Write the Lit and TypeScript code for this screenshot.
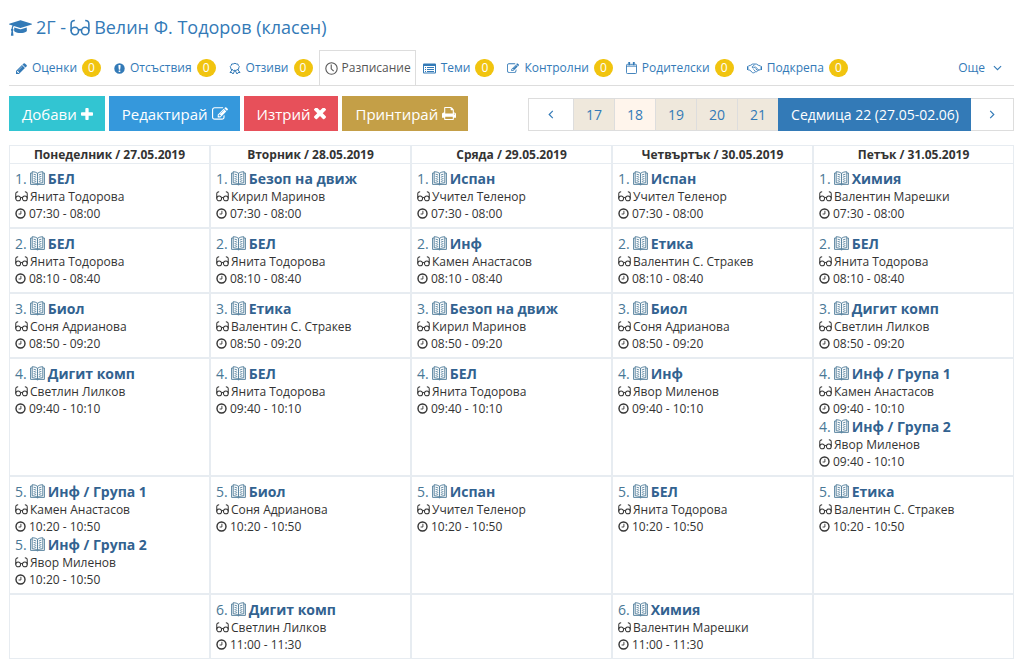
import { LitElement, html, css, svg, nothing } from "lit";
import { customElement, property, state } from "lit/decorators.js";
import { classMap } from "lit/directives/class-map.js";

type Glyph = { box: string; w: number; h: number; body: unknown };

const EDIT_PATH =
  "M888 1184l116-116-152-152-116 116v56h96v96h56zm440-720q-16-16-33 1l-350 350q-17 17-1 33t33-1l350-350q17-17 1-33zm80 594v190q0 119-84.5 203.5t-203.5 84.5h-832q-119 0-203.5-84.5t-84.5-203.5v-832q0-119 84.5-203.5t203.5-84.5h832q63 0 117 25 15 7 18 23 3 17-9 29l-49 49q-14 14-32 8-23-6-45-6h-832q-66 0-113 47t-47 113v832q0 66 47 113t113 47h832q66 0 113-47t47-113v-126q0-13 9-22l64-64q15-15 35-7t20 29zm-96-738l288 288-672 672h-288v-288zm444 132l-92 92-288-288 92-92q28-28 68-28t68 28l152 152q28 28 28 68t-28 68z";

const GLASSES = svg`<g fill="none" stroke="currentColor" stroke-width="2.100"><circle cx="6.500" cy="15.500" r="5"/><circle cx="20.500" cy="15.500" r="5"/><path d="M11.500 14.500q2-1.500 4 0M1.500 15.500V6q0-4.500 5-4.500M25.500 15.500V6q0-4.500-5-4.500"/></g>`;

const GLYPHS: Record<string, Glyph> = {
  cap: {
    box: "0 0 2304 1792", w: 23, h: 18,
    body: svg`<path d="M1774 836l18 316q4 69-82 128t-235 93.5-323 34.5-323-34.5-235-93.5-82-128l18-316 574 181q22 7 48 7t48-7zm530-324q0 23-22 31l-1120 352q-4 1-10 1t-10-1l-652-206q-43 34-71 111.5t-34 178.5q63 36 63 109 0 69-58 107l58 433q2 14-8 25-9 11-24 11h-192q-15 0-24-11-10-11-8-25l58-433q-58-38-58-107 0-73 65-111 11-207 98-330l-333-104q-22-8-22-31t22-31l1120-352q4-1 10-1t10 1l1120 352q22 8 22 31z"/>`,
  },
  glassesLarge: { box: "0 0 27 23", w: 20, h: 18, body: GLASSES },
  glasses: { box: "0 0 27 23", w: 13, h: 11, body: GLASSES },
  pencil: {
    box: "128 128 1536 1536", w: 11, h: 11,
    body: svg`<path d="M491 1536l91-91-235-235-91 91v107h128v128h107zm523-928q0-22-22-22-10 0-17 7l-542 542q-7 7-7 17 0 22 22 22 10 0 17-7l542-542q7-7 7-17zm-54-192l416 416-832 832h-416v-416zm683 96q0 53-37 90l-166 166-416-416 166-165q36-38 90-38 53 0 91 38l235 234q37 39 37 91z"/>`,
  },
  alert: {
    box: "0 0 12 12", w: 11, h: 11,
    body: svg`<path fill-rule="evenodd" d="M6 .3a5.700 5.700 0 1 0 0 11.400A5.700 5.700 0 0 0 6 .3zM4.900 2.300h2.200v2L6.700 7.300H5.300L4.900 4.300zM5.100 8.300h1.800v1.600H5.100z"/>`,
  },
  ribbon: {
    box: "0 0 24 24", w: 12, h: 13,
    body: svg`<g fill="none" stroke="currentColor" stroke-width="2"><path d="M12 1.500l2.600 1.400 3 .1 1 2.800 1.900 2.200-1 2.800-.6 3-2.900.8-2.300 1.600L12 15.300l-2.700.9L7 14.600l-2.900-.8-.6-3-1-2.800 1.900-2.200 1-2.800 3-.1z"/><path d="M7 13.500L2 20l4 .2L8 23l3.600-7M17 13.500l5 6.500-4 .2-2 2.800-3.600-7"/></g>`,
  },
  clockThin: {
    box: "0 0 24 24", w: 13, h: 13,
    body: svg`<g fill="none" stroke="currentColor" stroke-width="2"><circle cx="12" cy="12" r="10.500"/><path d="M11.500 4.500v8l4.500 4.500"/></g>`,
  },
  list: {
    box: "0 0 13 11", w: 13, h: 11,
    body: svg`<path fill-rule="evenodd" d="M1 .5h11q1 0 1 1v8q0 1-1 1H1q-1 0-1-1v-8q0-1 1-1zM1 3v6.500h11V3z"/><path d="M2 4h1v1H2zM4 4h7v1H4zM2 6h1v1H2zM4 6h7v1H4zM2 8h1v1H2zM4 8h7v1H4z"/>`,
  },
  editSmall: { box: "0 128 1792 1536", w: 12, h: 11, body: svg`<path d=${EDIT_PATH}/>` },
  edit: { box: "0 128 1792 1536", w: 16, h: 14, body: svg`<path d=${EDIT_PATH}/>` },
  calendar: {
    box: "0 0 12 13", w: 11, h: 12,
    body: svg`<path fill="none" stroke="currentColor" d="M2.500 2.500H1.500q-1 0-1 1v8q0 1 1 1h9q1 0 1-1v-8q0-1-1-1h-1M4.500 2.500h3M.5 4.500h11"/><path d="M2.500 0h2v3.500h-2zM7.500 0h2v3.500h-2z"/>`,
  },
  hands: {
    box: "0 0 32 22", w: 15, h: 11,
    body: svg`<g fill="none" stroke="currentColor" stroke-width="2"><path stroke-width="3" d="M1.500 6v8M30.500 6v8"/><path d="M3 5.500l4-1 5-3h8l5 3 4 1M16 3.500l-5 4q0 3 3 2l4-2 7 7M3 14.500h3l6 5.500q2 1 3-1 2 1 3-1 2 1 3-1 2 0 3-2.500l5-1M14 13l4 4M18 11l4 4"/></g>`,
  },
  chevronDown: { box: "0 0 10 6", w: 9, h: 6, body: svg`<path fill="none" stroke="currentColor" stroke-width="1.200" d="M1 .8l4 4 4-4"/>` },
  chevronLeft: { box: "0 0 6 10", w: 6, h: 9, body: svg`<path fill="none" stroke="currentColor" stroke-width="1.300" d="M5 1L1 5l4 4"/>` },
  chevronRight: { box: "0 0 6 10", w: 6, h: 9, body: svg`<path fill="none" stroke="currentColor" stroke-width="1.300" d="M1 1l4 4-4 4"/>` },
  plus: {
    box: "192 128 1408 1408", w: 12, h: 12,
    body: svg`<path d="M1600 736v192q0 40-28 68t-68 28h-416v416q0 40-28 68t-68 28h-192q-40 0-68-28t-28-68v-416h-416q-40 0-68-28t-28-68v-192q0-40 28-68t68-28h416v-416q0-40 28-68t68-28h192q40 0 68 28t28 68v416h416q40 0 68 28t28 68z"/>`,
  },
  cross: {
    box: "302 434 1188 1188", w: 12, h: 12,
    body: svg`<path d="M1490 1322q0 40-28 68l-136 136q-28 28-68 28t-68-28l-294-294-294 294q-28 28-68 28t-68-28l-136-136q-28-28-28-68t28-68l294-294-294-294q-28-28-28-68t28-68l136-136q28-28 68-28t68 28l294 294 294-294q28-28 68-28t68 28l136 136q28 28 28 68t-28 68l-294 294 294 294q28 28 28 68z"/>`,
  },
  print: {
    box: "64 128 1664 1536", w: 14, h: 13,
    body: svg`<path d="M448 1536h896v-256h-896v256zm0-640h896v-384h-160q-40 0-68-28t-28-68v-160h-640v640zm1152 64q0-26-19-45t-45-19-45 19-19 45 19 45 45 19 45-19 19-45zm128 0v416q0 13-9.500 22.500t-22.500 9.500h-224v160q0 40-28 68t-68 28h-960q-40 0-68-28t-28-68v-160h-224q-13 0-22.500-9.500t-9.500-22.500v-416q0-79 56.500-135.500t135.500-56.500h64v-544q0-40 28-68t68-28h672q40 0 88 20t76 48l152 152q28 28 48 76t20 88v256h64q79 0 135.500 56.500t56.500 135.500z"/>`,
  },
  clock: {
    box: "0 0 12 11", w: 12, h: 11,
    body: svg`<g fill="none" stroke="currentColor"><circle cx="5.500" cy="5.500" r="4.500" stroke-width="1.400"/><path d="M5.900 2.800v3.200H3.600" stroke-width=".9"/></g>`,
  },
  book: {
    box: "0 0 15 15", w: 15, h: 15,
    body: svg`<g fill="none" stroke="currentColor" stroke-width=".9"><path d="M7.500 2.300Q5.500.7 2.200.7v11q3.300 0 5.300 1.600 2-1.600 5.300-1.600V.7Q9.500.7 7.500 2.300zv11M2.200 2H.6v11.400h5.600q1.300 0 1.300.8 0-.8 1.300-.8h5.600V2h-1.600"/><path d="M3.600 3.200q1.400.2 2.600.9M3.600 5.400q1.400.2 2.600.9M3.600 7.600q1.400.2 2.600.9M3.600 9.700q1.400.2 2.600.9M11.400 3.200q-1.400.2-2.600.9M11.400 5.400q-1.400.2-2.600.9M11.400 7.600q-1.400.2-2.600.9M11.400 9.700q-1.400.2-2.600.9"/></g>`,
  },
};

const glyph = (name: string) => {
  const g = GLYPHS[name];
  return html`<svg class="glyph" viewBox=${g.box} width=${g.w} height=${g.h} fill="currentColor" aria-hidden="true">${g.body}</svg>`;
};

interface Lesson { no: number; subject: string; teacher: string; time: string }

const TIMES = ["", "07:30 - 08:00", "08:10 - 08:40", "08:50 - 09:20", "09:40 - 10:10", "10:20 - 10:50", "11:00 - 11:30"];
const L = (no: number, subject: string, teacher: string): Lesson => ({ no, subject, teacher, time: TIMES[no] });

const TANYA = "Янита Тодорова";
const KIRIL = "Кирил Маринов";
const UCHITEL = "Учител Теленор";
const MARESHKI = "Валентин Марешки";
const KAMEN = "Камен Анастасов";
const STRAKEV = "Валентин С. Стракев";
const SONYA = "Соня Адрианова";
const SVETLIN = "Светлин Лилков";
const YAVOR = "Явор Миленов";

const DAYS = [
  "Понеделник / 27.05.2019",
  "Вторник / 28.05.2019",
  "Сряда / 29.05.2019",
  "Четвъртък / 30.05.2019",
  "Петък / 31.05.2019",
];

const ROWS: Lesson[][][] = [
  [[L(1, "БЕЛ", TANYA)], [L(1, "Безоп на движ", KIRIL)], [L(1, "Испан", UCHITEL)], [L(1, "Испан", UCHITEL)], [L(1, "Химия", MARESHKI)]],
  [[L(2, "БЕЛ", TANYA)], [L(2, "БЕЛ", TANYA)], [L(2, "Инф", KAMEN)], [L(2, "Етика", STRAKEV)], [L(2, "БЕЛ", TANYA)]],
  [[L(3, "Биол", SONYA)], [L(3, "Етика", STRAKEV)], [L(3, "Безоп на движ", KIRIL)], [L(3, "Биол", SONYA)], [L(3, "Дигит комп", SVETLIN)]],
  [[L(4, "Дигит комп", SVETLIN)], [L(4, "БЕЛ", TANYA)], [L(4, "БЕЛ", TANYA)], [L(4, "Инф", YAVOR)], [L(4, "Инф / Група 1", KAMEN), L(4, "Инф / Група 2", YAVOR)]],
  [[L(5, "Инф / Група 1", KAMEN), L(5, "Инф / Група 2", YAVOR)], [L(5, "Биол", SONYA)], [L(5, "Испан", UCHITEL)], [L(5, "БЕЛ", TANYA)], [L(5, "Етика", STRAKEV)]],
  [[], [L(6, "Дигит комп", SVETLIN)], [], [L(6, "Химия", MARESHKI)], []],
];

const TABS: { icon: string; label: string; count?: number }[] = [
  { icon: "pencil", label: "Оценки", count: 0 },
  { icon: "alert", label: "Отсъствия", count: 0 },
  { icon: "ribbon", label: "Отзиви", count: 0 },
  { icon: "clockThin", label: "Разписание" },
  { icon: "list", label: "Теми", count: 0 },
  { icon: "editSmall", label: "Контролни", count: 0 },
  { icon: "calendar", label: "Родителски", count: 0 },
  { icon: "hands", label: "Подкрепа", count: 0 },
];

const ACTIONS = [
  { tone: "add", label: "Добави", icon: "plus" },
  { tone: "edit", label: "Редактирай", icon: "edit" },
  { tone: "remove", label: "Изтрий", icon: "cross" },
  { tone: "print", label: "Принтирай", icon: "print" },
];

@customElement("week-table")
export class WeekTable extends LitElement {
  @property({ attribute: false }) rows: Lesson[][][] = [];

  static styles = css`
    :host { display: block; }
    .week { width: 100%; table-layout: fixed; border-collapse: separate; border-spacing: 0; }
    .day {
      padding: 0; border: 1px solid #e7ecf1; border-bottom: 0;
      font-size: 12px; line-height: 17px; font-weight: 700; text-align: center; color: #333;
    }
    .slot { padding: 5px; border: 1px solid #e7ecf1; vertical-align: top; }
    .subject { display: flex; align-items: center; gap: 3px; font-size: 14px; line-height: 19px; color: #4a7896; text-decoration: none; }
    .name { font-weight: 700; color: #326290; }
    .line { display: flex; align-items: center; gap: 2px; font-size: 12px; line-height: 17px; color: #333; }
    .glyph { flex: none; }
  `;

  render() {
    return html`
      <table class="week">
        <thead>
          <tr>${DAYS.map((d) => html`<th class="day" scope="col">${d}</th>`)}</tr>
        </thead>
        <tbody>
          ${this.rows.map((r) => html`<tr>${r.map((cell) => html`<td class="slot">${cell.map((l) => this.lesson(l))}</td>`)}</tr>`)}
        </tbody>
      </table>
    `;
  }

  private lesson(l: Lesson) {
    return html`
      <a class="subject" href="#"><span>${l.no}.</span>${glyph("book")}<span class="name">${l.subject}</span></a>
      <div class="line">${glyph("glasses")}<span>${l.teacher}</span></div>
      <div class="line">${glyph("clock")}<span>${l.time}</span></div>
    `;
  }
}

@customElement("app-root")
export class AppRoot extends LitElement {
  @state() private active = "Разписание";

  static styles = css`
    :host {
      display: block; padding: 16px 10px 5px 9px; background: #fff; color: #333;
      font-family: "Open Sans", "Noto Sans", sans-serif;
    }
    .glyph { flex: none; }
    .title { display: flex; align-items: center; gap: 4px; margin: 0 0 11px; font-size: 18px; line-height: 23px; font-weight: 400; color: #337ab7; }
    .tabs { display: flex; height: 35px; border-bottom: 1px solid #ddd; }
    .tab {
      display: flex; align-items: center; gap: 5px; padding: 0 5px 0 6px; white-space: nowrap;
      border: 1px solid transparent; border-bottom: 0;
      font-size: 12px; line-height: 18px; color: #337ab7; text-decoration: none;
    }
    .tab.active { gap: 4px; padding: 0 4px 0 5px; color: #555; border-color: #ddd; }
    .more { margin-left: auto; gap: 8px; padding-right: 11px; }
    .badge { width: 19px; border-radius: 9px; background: #f1c40f; color: #fff; font-size: 12px; line-height: 18px; text-align: center; }
    .bar { display: flex; justify-content: space-between; align-items: flex-end; margin: 10px 0 14px; }
    .actions { display: flex; gap: 4px; }
    .action {
      display: flex; align-items: center; gap: 4px; height: 35px; padding: 0 12px 0 13px; border: 0;
      font: inherit; font-size: 15px; color: #fff; white-space: nowrap;
    }
    .add { background: #32c5d2; }
    .edit { background: #3598dc; }
    .remove { background: #e7505a; }
    .print { background: #c49f47; }
    .pager { display: flex; height: 33px; }
    .page {
      display: flex; align-items: center; justify-content: center; box-sizing: border-box;
      padding: 0 12px; border: 1px solid #ddd; border-right-width: 0;
      font-size: 14px; color: #337ab7; text-decoration: none; white-space: nowrap; background: #fff;
    }
    .step { padding: 0 19px; }
    .step:last-child { padding: 0 18px; border-right-width: 1px; border-left-width: 0; }
    .past { background: #efe8dc; }
    .near { background: #fff5ec; }
    .current { padding: 0 12px; background: #337ab7; border-color: #337ab7; color: #fff; }
  `;

  private select(e: Event, label: string) {
    e.preventDefault();
    this.active = label;
  }

  render() {
    return html`
      <h1 class="title">${glyph("cap")}<span>2Г -</span>${glyph("glassesLarge")}<span>Велин Ф. Тодоров (класен)</span></h1>
      <nav class="tabs">
        ${TABS.map((t) => html`
          <a href="#" class=${classMap({ tab: true, active: t.label === this.active })} @click=${(e: Event) => this.select(e, t.label)}>
            ${glyph(t.icon)}<span>${t.label}</span>${t.count === undefined ? nothing : html`<span class="badge">${t.count}</span>`}
          </a>`)}
        <a href="#" class="tab more"><span>Още</span>${glyph("chevronDown")}</a>
      </nav>
      <div class="bar">
        <div class="actions">
          ${ACTIONS.map((a) => html`<button type="button" class="action ${a.tone}"><span>${a.label}</span>${glyph(a.icon)}</button>`)}
        </div>
        <nav class="pager">
          <a href="#" class="page step" aria-label="Назад">${glyph("chevronLeft")}</a>
          ${[17, 18, 19, 20, 21].map((n) => html`<a href="#" class=${classMap({ page: true, past: n !== 18, near: n === 18 })}>${n}</a>`)}
          <a href="#" class="page current">Седмица 22 (27.05-02.06)</a>
          <a href="#" class="page step" aria-label="Напред">${glyph("chevronRight")}</a>
        </nav>
      </div>
      <week-table .rows=${ROWS}></week-table>
    `;
  }
}
